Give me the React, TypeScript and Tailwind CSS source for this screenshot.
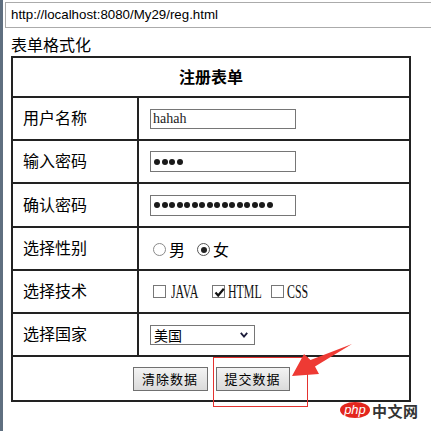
import React from 'react';

const cjk = "font-['Noto_Sans_CJK_SC',sans-serif]";
const serif = "font-['Liberation_Serif','Noto_Sans_CJK_SC',serif]";

function Radio({ checked }: { checked?: boolean }) {
  return (
    <span className={`flex h-[13px] w-[13px] items-center justify-center rounded-full border bg-white ${checked ? 'border-[#555]' : 'border-[#8a8a8a]'}`}>
      {checked && <span className="h-[6px] w-[6px] rounded-full bg-[#222]" />}
    </span>
  );
}

function Check({ checked }: { checked?: boolean }) {
  return (
    <span className="relative flex h-[13px] w-[13px] items-center justify-center border border-[#777] bg-white">
      {checked && (
        <svg viewBox="0 0 13 13" className="absolute left-[0px] top-[0px] h-[13px] w-[13px]">
          <path d="M2.5 6.5 L5.2 9.5 L10.8 2.8" fill="none" stroke="#111" strokeWidth="2.2" />
        </svg>
      )}
    </span>
  );
}

function Latin({ text, w }: { text: string; w: string }) {
  return (
    <span className={`${w} inline-block overflow-visible whitespace-nowrap`}>
      <span className={`inline-block origin-left scale-x-[0.66] text-[18px] leading-[18px] text-[#111] ${serif}`}>{text}</span>
    </span>
  );
}

function Password({ count }: { count: number }) {
  return (
    <div className="flex h-[21px] w-[146px] items-center gap-[1.5px] border border-[#767676] bg-white pl-[3px]">
      {Array.from({ length: count }).map((_, i) => (
        <span key={i} className="h-[6px] w-[6px] rounded-full bg-[#1a1a1a]" />
      ))}
    </div>
  );
}

function Row({ label, children, h }: { label: string; children: React.ReactNode; h: string }) {
  return (
    <div className={`flex ${h} border-b-2 border-[#222]`}>
      <div className={`flex w-[126px] items-center border-r-2 border-[#222] pb-[3px] pl-[10px] text-[16px] text-black ${cjk}`}>{label}</div>
      <div className="flex flex-1 items-center pl-[11px]">{children}</div>
    </div>
  );
}

export default function App() {
  return (
    <div className="relative flex min-h-[431px] w-[431px] overflow-hidden bg-white">
      <div className="w-[3px] shrink-0 bg-[#5f6f80]" />
      <div className="flex-1">
        {/* address bar */}
        <div className="ml-[2px] mt-[2px] flex h-[26px] items-center border border-r-0 border-[#ababab] pl-[5px] text-[13.3px] text-black font-['Liberation_Sans',sans-serif]">
          http://localhost:8080/My29/reg.html
        </div>

        <div className={`ml-[8px] mt-[6px] text-[16px] leading-[20px] text-black ${cjk}`}>表单格式化</div>

        {/* form table */}
        <div className="ml-[8px] mt-[2px] w-[400px] border-2 border-[#222]">
          <div className={`flex h-[40px] items-center justify-center border-b-2 border-[#222] pb-[3px] text-[16px] font-bold text-black ${cjk}`}>
            注册表单
          </div>

          <Row label="用户名称" h="h-[43px]">
            <input
              readOnly
              value="hahah"
              className={`h-[20px] w-[146px] border border-[#767676] px-[2px] text-[14px] text-[#222] outline-none ${serif}`}
            />
          </Row>
          <Row label="输入密码" h="h-[43px]">
            <Password count={4} />
          </Row>
          <Row label="确认密码" h="h-[44px]">
            <Password count={16} />
          </Row>
          <Row label="选择性别" h="h-[43px]">
            <div className={`flex items-center text-[16px] text-black ${cjk}`}>
              <span className="ml-[3px] pt-[2px]"><Radio /></span>
              <span className="ml-[3px]">男</span>
              <span className="ml-[12px] pt-[2px]"><Radio checked /></span>
              <span className="ml-[3px]">女</span>
            </div>
          </Row>
          <Row label="选择技术" h="h-[43px]">
            <div className="flex items-center">
              <span className="ml-[3px]"><Check /></span>
              <span className="ml-[5px] flex"><Latin text="JAVA" w="w-[41px]" /></span>
              <Check checked />
              <span className="ml-[3px] flex"><Latin text="HTML" w="w-[43px]" /></span>
              <Check />
              <span className="ml-[3px] flex"><Latin text="CSS" w="w-[30px]" /></span>
            </div>
          </Row>
          <Row label="选择国家" h="h-[43px]">
            <div className={`flex h-[20px] w-[105px] items-center justify-between border border-[#767676] bg-white pl-[3px] pr-[6px] text-[14px] text-black ${cjk}`}>
              <span className="leading-none">美国</span>
              <svg viewBox="0 0 8 6" className="h-[6px] w-[8px]">
                <path d="M0.8 0.8 L4 4.6 L7.2 0.8" fill="none" stroke="#1c1c3a" strokeWidth="1.8" />
              </svg>
            </div>
          </Row>

          <div className="flex h-[43px] items-center justify-center gap-[8px]">
            <button className={`h-[24px] w-[75px] border border-[#707070] bg-gradient-to-b from-[#f3f3f3] to-[#dadada] text-[13px] tracking-[1px] text-black ${cjk}`}>
              清除数据
            </button>
            <button className={`h-[24px] w-[74px] border border-[#707070] bg-gradient-to-b from-[#f3f3f3] to-[#dadada] text-[13px] tracking-[1px] text-black ${cjk}`}>
              提交数据
            </button>
          </div>
        </div>
      </div>

      {/* annotation: red frame and arrow */}
      <div className="absolute left-[213px] top-[357px] h-[50px] w-[95px] border border-[#e4322f]" />
      <svg viewBox="280 340 80 45" className="absolute left-[280px] top-[340px] h-[45px] w-[80px]">
        <polygon points="292,376 304,354 310.5,360 352,344 315,366.5 319,374" fill="#ee3a34" />
      </svg>

      {/* watermark */}
      <div className="absolute left-[340px] top-[402px] flex items-center">
        <span className="flex h-[16px] w-[30px] items-center justify-center rounded-[50%] bg-[#e3261d] pb-[2px] text-[13px] italic leading-none text-white font-['Liberation_Sans',sans-serif]">
          php
        </span>
        <span className={`ml-[2px] text-[15px] font-bold leading-none tracking-[0.5px] text-[#333] ${cjk}`}>中文网</span>
      </div>
    </div>
  );
}
